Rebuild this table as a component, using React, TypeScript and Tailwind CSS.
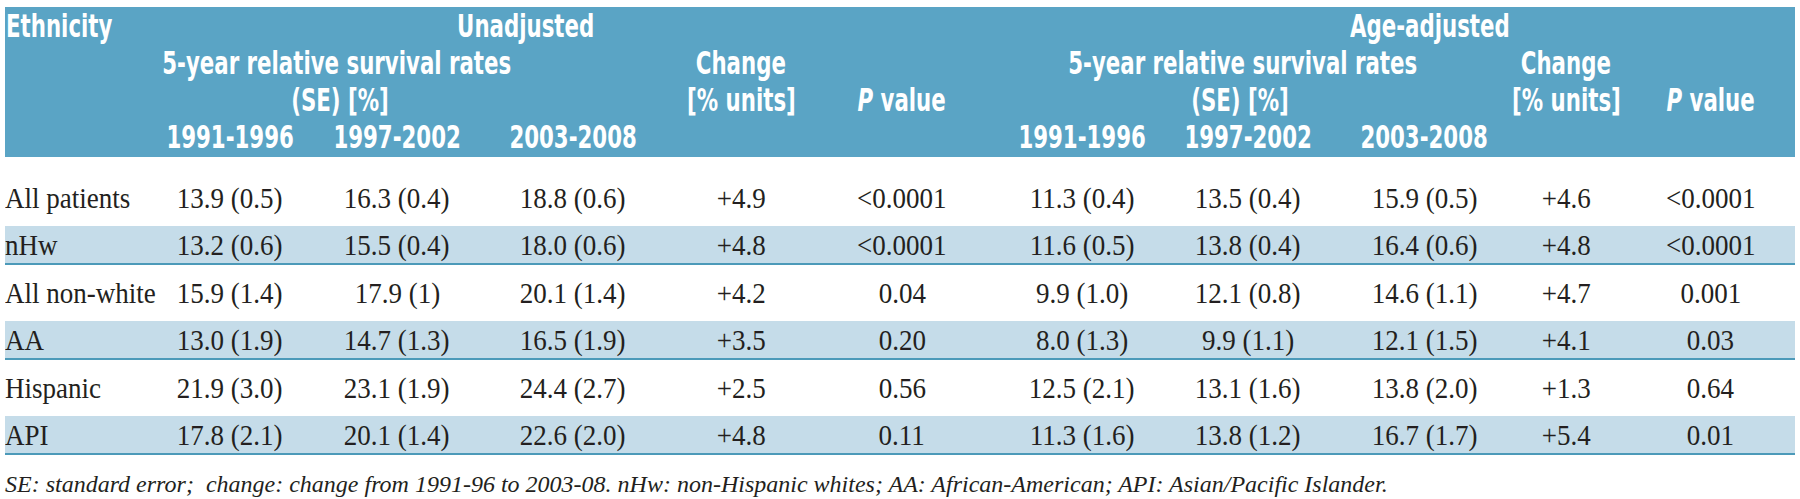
import React from "react";

const rows = [
  ["All patients", "13.9 (0.5)", "16.3 (0.4)", "18.8 (0.6)", "+4.9", "<0.0001", "11.3 (0.4)", "13.5 (0.4)", "15.9 (0.5)", "+4.6", "<0.0001"],
  ["nHw", "13.2 (0.6)", "15.5 (0.4)", "18.0 (0.6)", "+4.8", "<0.0001", "11.6 (0.5)", "13.8 (0.4)", "16.4 (0.6)", "+4.8", "<0.0001"],
  ["All non-white", "15.9 (1.4)", "17.9 (1)", "20.1 (1.4)", "+4.2", "0.04", "9.9 (1.0)", "12.1 (0.8)", "14.6 (1.1)", "+4.7", "0.001"],
  ["AA", "13.0 (1.9)", "14.7 (1.3)", "16.5 (1.9)", "+3.5", "0.20", "8.0 (1.3)", "9.9 (1.1)", "12.1 (1.5)", "+4.1", "0.03"],
  ["Hispanic", "21.9 (3.0)", "23.1 (1.9)", "24.4 (2.7)", "+2.5", "0.56", "12.5 (2.1)", "13.1 (1.6)", "13.8 (2.0)", "+1.3", "0.64"],
  ["API", "17.8 (2.1)", "20.1 (1.4)", "22.6 (2.0)", "+4.8", "0.11", "11.3 (1.6)", "13.8 (1.2)", "16.7 (1.7)", "+5.4", "0.01"],
];

const cols =
  "grid grid-cols-[140px_170px_164px_188px_148px_174px_186px_146px_159px_172px_143px]";

// extra padding per column so the text sits under its header
const cellPad = ["", "", "", "", "", "", "", "", "pl-[48px]", "", "pr-[26px]"];

const Hd = ({ className, children }: { className: string; children: React.ReactNode }) => (
  <div className={`flex justify-center whitespace-nowrap ${className}`}>
    <span className="inline-block scale-x-[0.74]">{children}</span>
  </div>
);

export default function App() {
  return (
    <div className="bg-white w-[1800px] h-[499px] pt-[7px] pl-[5px]">
      <div className="w-[1790px]">
        {/* header */}
        <div
          className={`${cols} grid-rows-[37px_37px_37px_37px] h-[150px] pt-[1px] bg-[#5aa4c5] text-white font-bold text-[32px] leading-[37px]`}
          style={{ fontFamily: '"DejaVu Sans Condensed", "DejaVu Sans", sans-serif' }}
        >
          <div className="col-start-1 row-start-1 pl-[1px] whitespace-nowrap">
            <span className="inline-block origin-left scale-x-[0.74]">Ethnicity</span>
          </div>
          <Hd className="col-start-2 col-span-5 row-start-1 pr-[82px]">Unadjusted</Hd>
          <Hd className="col-start-2 col-span-3 row-start-2 pr-[138px]">5-year relative survival rates</Hd>
          <Hd className="col-start-2 col-span-3 row-start-3 pr-[132px]">(SE) [%]</Hd>
          <Hd className="col-start-2 row-start-4">1991-1996</Hd>
          <Hd className="col-start-3 row-start-4">1997-2002</Hd>
          <Hd className="col-start-4 row-start-4">2003-2008</Hd>
          <Hd className="col-start-5 row-start-2">Change</Hd>
          <Hd className="col-start-5 row-start-3">[% units]</Hd>
          <Hd className="col-start-6 row-start-3">
            <i>P</i>&nbsp;value
          </Hd>

          <Hd className="col-start-7 col-span-5 row-start-1 pl-[76px]">Age-adjusted</Hd>
          <Hd className="col-start-7 col-span-3 row-start-2 pl-[16px]">5-year relative survival rates</Hd>
          <Hd className="col-start-7 col-span-3 row-start-3 pl-[10px]">(SE) [%]</Hd>
          <Hd className="col-start-7 row-start-4">1991-1996</Hd>
          <Hd className="col-start-8 row-start-4">1997-2002</Hd>
          <Hd className="col-start-9 row-start-4 pl-[48px]">2003-2008</Hd>
          <Hd className="col-start-10 row-start-2">Change</Hd>
          <Hd className="col-start-10 row-start-3">[% units]</Hd>
          <Hd className="col-start-11 row-start-3 pr-[26px]">
            <i>P</i>&nbsp;value
          </Hd>
        </div>

        {/* body */}
        <div
          className="pt-[13px] text-[30px] text-[#231f20]"
          style={{ fontFamily: '"Liberation Serif", "Times New Roman", serif' }}
        >
          {rows.map((r, i) => {
            const shaded = i % 2 === 1;
            return (
              <div
                key={r[0]}
                className={
                  shaded
                    ? `${cols} h-[39px] leading-[37px] bg-[#c5dce9] border-b-2 border-[#4c9ab9]`
                    : `${cols} h-[56px] leading-[56px]`
                }
              >
                {r.map((v, j) =>
                  j === 0 ? (
                    <div key={j} className="whitespace-nowrap">
                      <span className="inline-block origin-left scale-x-[0.9]">{v}</span>
                    </div>
                  ) : (
                    <div key={j} className={`flex justify-center whitespace-nowrap ${cellPad[j]}`}>
                      <span className="inline-block scale-x-[0.9]">{v}</span>
                    </div>
                  )
                )}
              </div>
            );
          })}
        </div>

        {/* footnote */}
        <p
          className="mt-[14px] text-[24px] leading-[30px] italic text-[#231f20] whitespace-pre"
          style={{ fontFamily: '"Liberation Serif", "Times New Roman", serif' }}
        >
          SE: standard error;  change: change from 1991-96 to 2003-08. nHw: non-Hispanic whites; AA: African-American; API: Asian/Pacific Islander.
        </p>
      </div>
    </div>
  );
}
